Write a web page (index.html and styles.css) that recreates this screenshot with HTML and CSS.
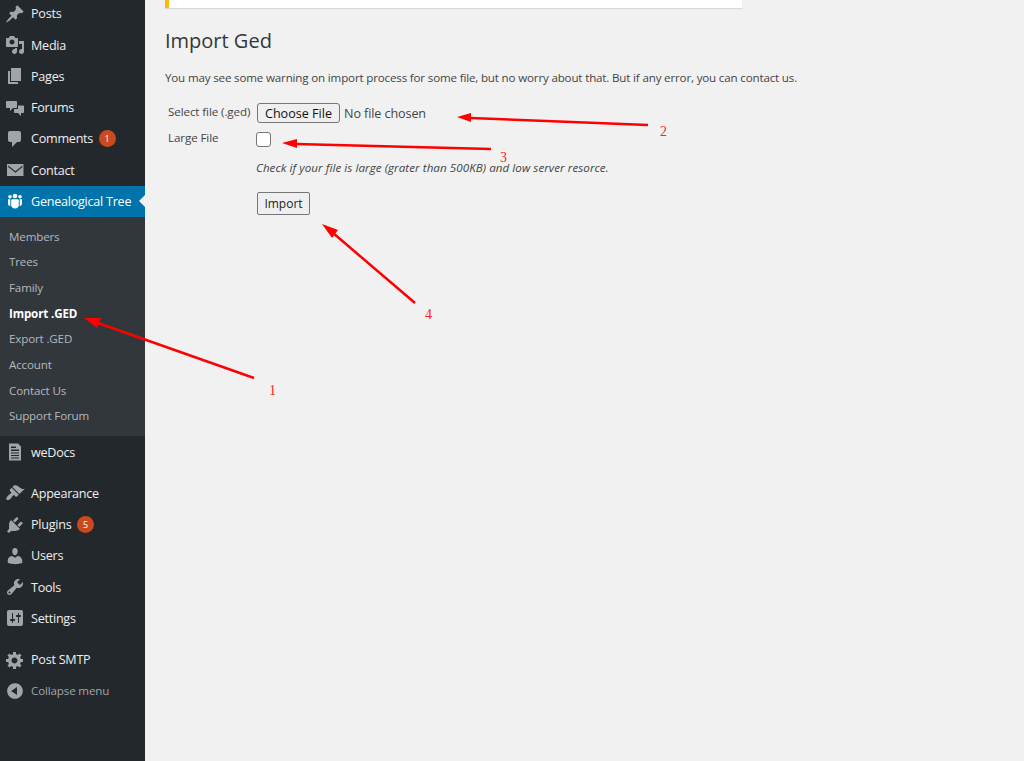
FILE: index.html
```html
<!DOCTYPE html>
<html lang="en">
<head>
<meta charset="utf-8">
<title>Import Ged</title>
<link rel="stylesheet" href="styles.css">
</head>
<body>
<div class="page">
  <nav class="sidebar">
    <ul class="menu">
      <li class="item"><svg class="icon" viewBox="0 0 20 20"><path d="M10.44 3.02l1.82-1.82 6.36 6.35-1.83 1.82c-1.05-.68-2.48-.57-3.41.36l-.75.75c-.92.93-1.04 2.35-.35 3.41l-1.83 1.82-2.41-2.41-2.8 2.79c-.42.42-3.38 2.71-3.8 2.29s1.86-3.39 2.28-3.81l2.79-2.79L4.1 9.36l1.83-1.82c1.05.69 2.48.57 3.4-.36l.75-.75c.93-.92 1.05-2.35.36-3.41z"/></svg><span>Posts</span></li>
      <li class="item"><svg class="icon" viewBox="0 0 20 20"><path d="M13 11V4c0-.55-.45-1-1-1h-1.67L9 1H5L3.67 3H2c-.55 0-1 .45-1 1v7c0 .55.45 1 1 1h10c.55 0 1-.45 1-1zM7 4.5c1.38 0 2.5 1.12 2.5 2.5S8.38 9.5 7 9.5 4.5 8.38 4.5 7 5.62 4.5 7 4.5zM14 6h5v10.5c0 1.38-1.12 2.5-2.5 2.5S14 17.88 14 16.5s1.12-2.5 2.5-2.5c.17 0 .34.02.5.05V9h-3V6zm-4 8.05V13h2v3.5c0 1.38-1.12 2.5-2.5 2.5S7 17.88 7 16.5 8.12 14 9.5 14c.17 0 .34.02.5.05z"/></svg><span>Media</span></li>
      <li class="item"><svg class="icon" viewBox="0 0 20 20"><path d="M6 15V2h10v13H6zm-1 1h8v2H3V5h2v11z"/></svg><span>Pages</span></li>
      <li class="item"><svg class="icon" viewBox="0 0 20 20"><path d="M2 3h9c.6 0 1 .4 1 1v5c0 .6-.4 1-1 1H8l-3 3v-3H2c-.6 0-1-.4-1-1V4c0-.6.4-1 1-1zM13 7.500h5c.6 0 1 .4 1 1V14c0 .6-.4 1-1 1h-2v3l-3-3h-3c-.6 0-1-.4-1-1v-3h3c1 0 1-.6 1-1.500z"/></svg><span>Forums</span></li>
      <li class="item"><svg class="icon" viewBox="0 0 20 20"><path d="M5 2h9c1.100 0 2 .9 2 2v7c0 1.100-.9 2-2 2h-2l-5 5v-5H5c-1.100 0-2-.9-2-2V4c0-1.100.9-2 2-2z"/></svg><span>Comments</span><b class="badge">1</b></li>
      <li class="item"><svg class="icon" viewBox="0 0 20 20"><path fill-rule="evenodd" d="M2 4h16.500v12H2zM3.200 5.500l7.300 5.700 7-5.700v1.400l-7 5.800-7.300-5.800z"/></svg><span>Contact</span></li>
      <li class="item current"><svg class="icon" viewBox="0 0 20 20"><circle cx="10" cy="5" r="2.300"/><circle cx="5" cy="5.800" r="1.800"/><circle cx="15" cy="5.800" r="1.800"/><path d="M7.500 8.300h5c.8 0 1.300.6 1.300 1.300V14c0 2-1.600 3.500-3.800 3.500S6.200 16 6.200 14V9.600C6.200 8.900 6.700 8.300 7.500 8.300zM3 8.300h2.300v6c0 .3 0 .6.100.9C3.800 14.900 3 13.800 3 12.300V8.300zM14.700 8.300H17v4c0 1.500-.8 2.600-2.400 2.900.1-.3.100-.6.100-.9z"/></svg><span>Genealogical Tree</span></li>
    </ul>
    <ul class="submenu">
      <li>Members</li>
      <li>Trees</li>
      <li>Family</li>
      <li class="active">Import .GED</li>
      <li>Export .GED</li>
      <li>Account</li>
      <li>Contact Us</li>
      <li>Support Forum</li>
    </ul>
    <ul class="menu">
      <li class="item"><svg class="icon" viewBox="0 0 20 20"><path d="M4 1.500h9l3 3V18.500H4zM6 4.500v1.500h5V4.500zM6 7.500v1.500h8V7.500zM6 10.500v1h8v-1zM6 13v1h8v-1zM6 15.500v1h8v-1z" fill-rule="evenodd"/></svg><span>weDocs</span></li>
    </ul>
    <ul class="menu group">
      <li class="item"><svg class="icon" viewBox="0 0 20 20"><path d="M14.480 11.060L7.410 3.990l1.500-1.500c.5-.56 2.300-.47 3.510.32 1.210.8 1.430 1.280 2.910 2.100 1.180.64 2.450 1.260 4.450.85zM13.770 11.770L6.700 4.700 4.930 6.470c-.39.39-.39 1.020 0 1.410l1.060 1.060c.39.39.39 1.030 0 1.420-.6.6-1.430 1.110-2.210 1.690-.35.26-.7.53-1.010.84-1.340 1.340-1.810 3.400-1.230 3.980.58.580 2.640.11 3.980-1.230.31-.31.580-.66.840-1.010.580-.780 1.090-1.610 1.690-2.210.39-.39 1.030-.39 1.420 0l1.060 1.060c.39.39 1.020.39 1.410 0z"/></svg><span>Appearance</span></li>
      <li class="item"><svg class="icon" viewBox="0 0 20 20"><path d="M13.110 4.360L9.870 7.600 8 5.730l3.240-3.240c.35-.34 1.050-.2 1.560.32.52.51.66 1.210.31 1.550zm-8 1.770l.91-1.120 9.010 9.010-1.190.84c-.71.71-2.630 1.160-3.820 1.160H6.140L4.900 17.260c-.59.59-1.540.59-2.120 0-.59-.58-.59-1.530 0-2.120l1.240-1.240v-3.880c0-1.130.4-3.190 1.090-3.890zm7.260 3.970l3.240-3.240c.34-.35 1.040-.21 1.550.31.52.51.66 1.210.31 1.550l-3.240 3.250z"/></svg><span>Plugins</span><b class="badge">5</b></li>
      <li class="item"><svg class="icon" viewBox="0 0 20 20"><path d="M10 9.250c-2.270 0-2.730-3.440-2.730-3.440C7 4.020 7.820 2 9.970 2c2.160 0 2.980 2.020 2.710 3.810 0 0-.41 3.440-2.680 3.440zm0 2.570L12.720 10c2.390 0 4.520 2.330 4.520 4.530v2.490s-3.650 1.130-7.240 1.130c-3.650 0-7.240-1.130-7.240-1.130v-2.490c0-2.250 1.940-4.480 4.470-4.480z"/></svg><span>Users</span></li>
      <li class="item"><svg class="icon" viewBox="0 0 20 20"><path d="M16.680 9.770c-1.340 1.340-3.300 1.670-4.950.99l-5.410 6.520c-.99.99-2.590.99-3.580 0s-.99-2.590 0-3.570l6.520-5.420c-.68-1.650-.35-3.610.99-4.950 1.280-1.280 3.120-1.620 4.720-1.060l-2.890 2.890 2.820 2.820 2.860-2.870c.53 1.580.18 3.390-1.080 4.650zM3.810 16.210c.4.39 1.040.39 1.430 0 .4-.4.4-1.040 0-1.430-.39-.4-1.030-.4-1.430 0-.39.39-.39 1.030 0 1.430z"/></svg><span>Tools</span></li>
      <li class="item"><svg class="icon" viewBox="0 0 20 20"><path d="M18 16V4c0-1.100-.9-2-2-2H4c-1.100 0-2 .9-2 2v12c0 1.100.9 2 2 2h12c1.100 0 2-.9 2-2zM8 11h1c.55 0 1 .45 1 1s-.45 1-1 1H8v1.500c0 .28-.22.5-.5.5s-.5-.22-.5-.5V13H6c-.55 0-1-.45-1-1s.45-1 1-1h1V5.500c0-.28.22-.5.5-.5s.5.22.5.5V11zm5-2h-1c-.55 0-1-.45-1-1s.45-1 1-1h1V5.500c0-.28.22-.5.5-.5s.5.22.5.5V7h1c.55 0 1 .45 1 1s-.45 1-1 1h-1v5.500c0 .28-.22.5-.5.5s-.5-.22-.5-.5V9z"/></svg><span>Settings</span></li>
    </ul>
    <ul class="menu group">
      <li class="item"><svg class="icon" viewBox="0 0 20 20"><path d="M18 12h-2.180c-.17.7-.44 1.350-.81 1.930l1.540 1.540-2.100 2.100-1.540-1.540c-.58.36-1.230.63-1.910.79V19H8v-2.180c-.68-.16-1.330-.43-1.910-.79l-1.540 1.540-2.120-2.120 1.540-1.540c-.36-.58-.63-1.230-.79-1.910H1V9.030h2.170c.16-.7.44-1.350.8-1.940L2.430 5.550l2.100-2.100 1.540 1.540c.58-.37 1.240-.64 1.930-.81V2h3v2.180c.68.16 1.330.43 1.910.79l1.540-1.540 2.120 2.120-1.540 1.540c.36.59.64 1.240.8 1.940H18V12zm-8.500 1.500c1.660 0 3-1.340 3-3s-1.340-3-3-3-3 1.340-3 3 1.340 3 3 3z"/></svg><span>Post SMTP</span></li>
      <li class="item collapse"><svg class="icon" viewBox="0 0 20 20"><path d="M10 2.160c4.330 0 7.840 3.510 7.840 7.840s-3.510 7.840-7.840 7.840S2.160 14.330 2.160 10 5.710 2.160 10 2.160zm2 11.720V6.120L6.180 9.970z"/></svg><span>Collapse menu</span></li>
    </ul>
  </nav>
  <main class="content">
    <div class="notice"></div>
    <h1 class="title">Import Ged</h1>
    <p class="intro">You may see some warning on import process for some file, but no worry about that. But if any error, you can contact us.</p>
    <form class="form">
      <label class="label" for="gedfile">Select file (.ged)</label>
      <div class="field"><input class="file" id="gedfile" type="file"></div>
      <label class="label large" for="large">Large File</label>
      <div class="field">
        <input class="check" id="large" type="checkbox">
        <p class="hint">Check if your file is large (grater than 500KB) and low server resorce.</p>
        <button class="button" type="button">Import</button>
      </div>
    </form>
  </main>
  <svg class="marks" width="1024" height="761" viewBox="0 0 1024 761">
    <g class="arrow">
      <line x1="254" y1="378" x2="98" y2="323"/>
      <polygon points="84,318 101,318 97,328"/>
      <line x1="648" y1="125" x2="470" y2="118"/>
      <polygon points="457,117 471,113 471,122"/>
      <line x1="491" y1="149" x2="296" y2="144"/>
      <polygon points="282,143 297,139 297,148"/>
      <line x1="415" y1="303" x2="333" y2="233"/>
      <polygon points="322,224 338,230 332,238"/>
    </g>
    <g class="nums">
      <text x="269" y="395">1</text>
      <text x="660" y="136">2</text>
      <text x="500" y="162">3</text>
      <text x="425" y="319">4</text>
    </g>
  </svg>
</div>
</body>
</html>
```
FILE: styles.css
```css
* { box-sizing: border-box; }
html, body { margin: 0; padding: 0; height: 100%; overflow: hidden; }
body { background: #f1f1f1; font-family: "Open Sans", "Noto Sans", sans-serif; color: #444; }
ul { list-style: none; margin: 0; padding: 0; }

.page { position: relative; display: flex; width: 1024px; height: 761px; overflow: hidden; }

.sidebar { width: 145px; flex: none; background: #23282d; margin-top: -1.7px; height: 763px; }
.item { display: flex; align-items: center; height: 31.25px; padding-left: 5px; font-size: 12.6px; letter-spacing: -.25px; color: #eee; position: relative; }
.item span { margin-left: 6px; white-space: nowrap; }
.icon { width: 20px; height: 20px; flex: none; fill: #a0a5aa; }
.group { margin-top: 10px; }

.current { background: #0073aa; color: #fff; }
.current .icon { fill: #fff; }
.current::after { content: ""; position: absolute; right: 0; top: 50%; margin-top: -6px; border: 6px solid transparent; border-right-color: #f1f1f1; border-left: 0; }

.badge { display: block; width: 17px; height: 17px; margin-left: 5.5px; border-radius: 50%; background: #ca4a1f; color: #fff; font-size: 9px; font-weight: 400; line-height: 17px; text-align: center; letter-spacing: 0; }

.submenu { background: #32373c; padding: 6.6px 0 0; height: 219.4px; }
.submenu li { height: 25.7px; line-height: 25.7px; padding-left: 9px; font-size: 11.6px; letter-spacing: -.15px; color: #b4b9be; }
.submenu .active { color: #fff; font-weight: 700; }

.collapse { color: #a0a5aa; }
.collapse span { font-size: 11.6px; letter-spacing: -.15px; }

.content { flex: 1; padding-left: 20px; min-width: 0; }
.notice { width: 577px; height: 8px; background: #fff; border-left: 4px solid #ffb900; box-shadow: 0 1px 1px rgba(0,0,0,.1); }
.title { margin: 19px 0 0 0; font-size: 20px; line-height: 28px; font-weight: 400; color: #32373c; }
.intro { margin: 14px 0 0; font-size: 11.6px; line-height: 18px; letter-spacing: -.17px; }

.form { display: grid; grid-template-columns: 88px 1fr; margin: 15px 0 0 3px; font-size: 11.6px; }
.label { line-height: 20px; letter-spacing: -.1px; white-space: nowrap; }
.field { min-width: 0; }
.file { display: block; height: 21px; margin: 1px 0 4px 1px; font: 12.6px "Open Sans", sans-serif; letter-spacing: -.1px; color: #444; }
.file::file-selector-button { height: 20px; width: 83px; padding: 0; margin-right: 4px; background: #efefef; border: 1px solid #767676; border-radius: 3px; font: 12.6px "Open Sans", sans-serif; color: #111; }
.check { display: block; appearance: none; width: 15px; height: 15px; margin: 4px 0 0 0; background: #fff; border: 1px solid #767676; border-radius: 3px; }
.hint { margin: 12px 0 0; font-size: 11.6px; line-height: 18px; font-style: italic; letter-spacing: .06px; }
.button { display: block; height: 23px; width: 53px; margin: 15px 0 0 1px; padding: 0; background: #efefef; border: 1px solid #767676; border-radius: 2px; font: 12px "Open Sans", sans-serif; color: #222; }

.marks { position: absolute; left: 0; top: 0; pointer-events: none; }
.arrow line { stroke: #f00; stroke-width: 2.5; }
.arrow polygon { fill: #f00; }
.nums text { font: 14px "Liberation Serif", serif; fill: #f22; }
```
